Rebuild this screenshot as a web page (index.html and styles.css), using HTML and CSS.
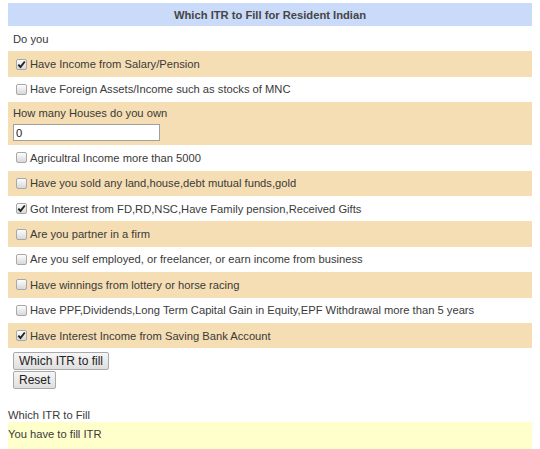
FILE: index.html
```html
<!DOCTYPE html>
<html>
<head>
<meta charset="utf-8">
<link rel="stylesheet" href="styles.css">
</head>
<body>
<div class="page">
  <div class="form">
    <div class="head">Which ITR to Fill for Resident Indian</div>
    <div class="row plain">Do you</div>
    <div class="row tan"><span class="box on"><svg viewBox="0 0 11 11" width="11" height="11"><path d="M2.3 5.6 L4.5 8 L8.8 2.5" fill="none" stroke="#222" stroke-width="1.9"/></svg></span>Have Income from Salary/Pension</div>
    <div class="row"><span class="box"></span>Have Foreign Assets/Income such as stocks of MNC</div>
    <div class="row tan tall">
      <div class="lbl">How many Houses do you own</div>
      <input class="num" type="text" value="0">
    </div>
    <div class="row"><span class="box"></span>Agricultral Income more than 5000</div>
    <div class="row tan"><span class="box"></span>Have you sold any land,house,debt mutual funds,gold</div>
    <div class="row"><span class="box on"><svg viewBox="0 0 11 11" width="11" height="11"><path d="M2.3 5.6 L4.5 8 L8.8 2.5" fill="none" stroke="#222" stroke-width="1.9"/></svg></span>Got Interest from FD,RD,NSC,Have Family pension,Received Gifts</div>
    <div class="row tan"><span class="box"></span>Are you partner in a firm</div>
    <div class="row"><span class="box"></span>Are you self employed, or freelancer, or earn income from business</div>
    <div class="row tan"><span class="box"></span>Have winnings from lottery or horse racing</div>
    <div class="row"><span class="box"></span>Have PPF,Dividends,Long Term Capital Gain in Equity,EPF Withdrawal more than 5 years</div>
    <div class="row tan"><span class="box on"><svg viewBox="0 0 11 11" width="11" height="11"><path d="M2.3 5.6 L4.5 8 L8.8 2.5" fill="none" stroke="#222" stroke-width="1.9"/></svg></span>Have Interest Income from Saving Bank Account</div>
  </div>
  <div class="actions">
    <button class="btn" type="button">Which ITR to fill</button>
    <button class="btn" type="button">Reset</button>
  </div>
  <div class="result-label">Which ITR to Fill</div>
  <div class="result">You have to fill ITR</div>
</div>
</body>
</html>
```

FILE: styles.css
```css
html, body {
  margin: 0;
  padding: 0;
  background: #fff;
}
body {
  font-family: "Liberation Sans", Arial, sans-serif;
  font-size: 11.2px;
  color: #3a3a3a;
}
.page {
  padding: 3px 8px 0 8px;
}
.form {
  display: flex;
  flex-direction: column;
}
.head {
  height: 23px;
  background: #c9dbf9;
  font-weight: bold;
  color: #454545;
  display: flex;
  align-items: center;
  justify-content: center;
}
.row {
  height: 25.4px;
  display: flex;
  align-items: center;
  padding-left: 8px;
  box-sizing: border-box;
  white-space: nowrap;
}
.row.plain {
  padding-left: 5px;
}
.tan {
  background: #f5deb3;
}
.tall {
  height: 43px;
  flex-direction: column;
  align-items: flex-start;
  justify-content: flex-start;
  padding-left: 5px;
  padding-top: 4px;
}
.lbl {
  line-height: 15px;
}
.num {
  margin: 3px 0 0 0;
  width: 147px;
  height: 17px;
  box-sizing: border-box;
  border: 1px solid #a0a0a0;
  padding: 0 2px;
  font-family: "Liberation Sans", Arial, sans-serif;
  font-size: 11.2px;
  color: #222;
  background: #fff;
  outline: none;
}
.box {
  width: 11px;
  height: 11px;
  box-sizing: border-box;
  border: 1px solid #a8a8a8;
  border-radius: 2px;
  background: linear-gradient(#fdfdfd, #d8d8d8);
  margin-right: 3px;
  display: flex;
  align-items: center;
  justify-content: center;
  flex: none;
}
.box svg {
  display: block;
  flex: none;
}
.actions {
  margin-top: 4px;
  padding-left: 5px;
  display: flex;
  flex-direction: column;
  align-items: flex-start;
  gap: 1px;
}
.btn {
  font-family: "Liberation Sans", Arial, sans-serif;
  font-size: 12px;
  color: #222;
  height: 18px;
  padding: 0 5px;
  border: 1px solid #a9a9a9;
  border-radius: 2px;
  background: linear-gradient(#f6f6f6, #dedede);
  line-height: 15px;
}
.result-label {
  margin-top: 19px;
  line-height: 14px;
}
.result {
  background: #ffffcc;
  height: 28px;
  padding-top: 5px;
  box-sizing: border-box;
  line-height: 15px;
}
```
